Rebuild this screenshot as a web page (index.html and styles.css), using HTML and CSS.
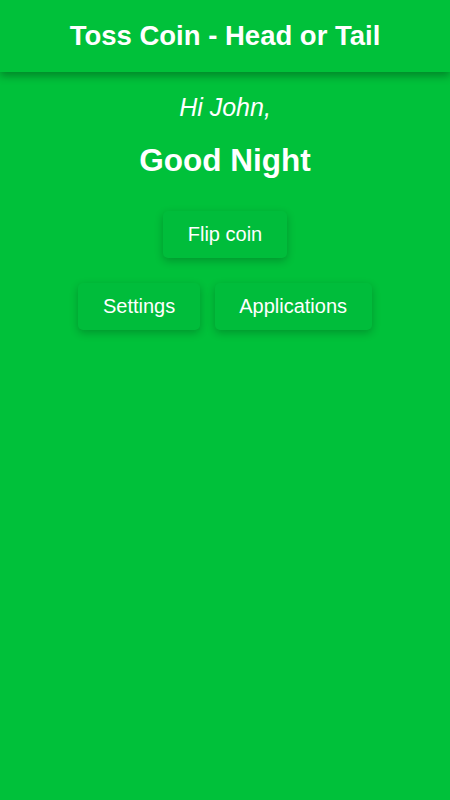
FILE: index.html
```html
<!DOCTYPE html>
<html lang="en">
<head>
  <meta charset="UTF-8" />
  <meta name="viewport" content="width=device-width, initial-scale=1.0"/>
  <title>Toss Coin - Head or Tail</title>
  <link rel="stylesheet" href="styles.css">
</head>
<body>

  <header>
    <h1>Toss Coin - Head or Tail</h1>
  </header>

  <div class="container">
    <p class="hello">Hi John,</p>
    <h2>Good Night</h2>

    <div class="row">
      <button>Flip coin</button>
    </div>
    <div class="row">
      <button>Settings</button>
      <button>Applications</button>
    </div>
  </div>

</body>
</html>
```

FILE: styles.css
```css
body {
  margin: 0;
  font-family: 'Liberation Sans', Arial, sans-serif;
  background-color: #00c13a;
  color: #ffffff;
  min-height: 800px;
}

header {
  height: 72px;
  display: flex;
  align-items: center;
  justify-content: center;
  background-color: #00c13a;
  box-shadow: 0 4px 8px rgba(0,0,0,0.3);
}

header h1 {
  margin: 0;
  font-size: 27.5px;
  font-weight: bold;
}

.container {
  text-align: center;
  padding-top: 20px;
}

.hello {
  margin: 0;
  font-size: 25px;
  font-style: italic;
  line-height: 30px;
}

.container h2 {
  margin: 18px 0 0;
  font-size: 31.5px;
  line-height: 40px;
}

.row {
  display: flex;
  justify-content: center;
  gap: 15px;
  margin-top: 25px;
}

.row:first-of-type {
  margin-top: 31px;
}

button {
  background-color: #00bd3b;
  color: #ffffff;
  border: none;
  height: 47px;
  padding: 0 24.5px;
  font-family: inherit;
  font-size: 20px;
  border-radius: 5px;
  box-shadow: 0 3px 8px rgba(0,0,0,0.22);
  cursor: pointer;
}
```
